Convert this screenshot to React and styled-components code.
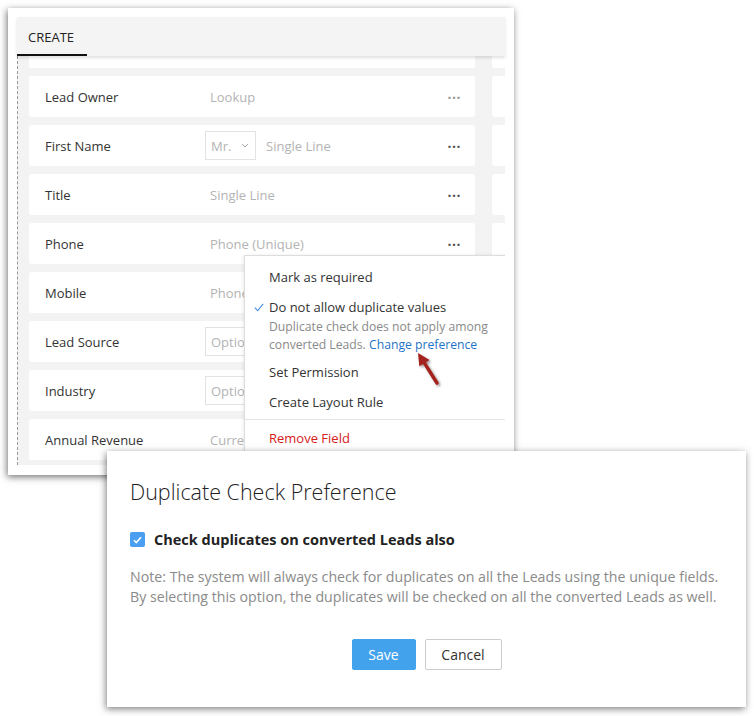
import React from 'react';
import styled, { createGlobalStyle } from 'styled-components';

const Global = createGlobalStyle`
  html, body { margin:0; padding:0; background:#fff; }
  body { font-family: "Open Sans", Lato, sans-serif; }
  * { box-sizing:border-box; }
`;

const Page = styled.div`
  position:relative;
  width:754px;
  height:716px;
  overflow:hidden;
  background:#fff;
`;

const Panel = styled.div`
  margin:8px 0 0 8px;
  width:506px;
  height:467px;
  padding:9px;
  background:#fff;
  box-shadow:-1px 2px 7px rgba(0,0,0,0.55);
`;

const Header = styled.div`
  height:39px;
  background:#f4f4f4;
  display:flex;
  align-items:flex-end;
  box-shadow:0 2px 3px rgba(0,0,0,0.12);
  position:relative;
  z-index:1;
`;

const Tab = styled.div`
  width:70px;
  height:39px;
  display:flex;
  align-items:center;
  padding-left:11px;
  padding-top:3px;
  font-size:13px;
  color:#222;
  border-bottom:2px solid #111;
`;

const Content = styled.div`
  position:relative;
  height:409px;
  background:#f3f3f3;
  overflow:hidden;
  border-left:1px dashed #999;
`;

const Grid = styled.div`
  display:grid;
  grid-template-columns:446px 60px;
  column-gap:17px;
  row-gap:8px;
  margin-top:-29px;
  padding-left:11px;
`;

const Card = styled.div`
  height:41px;
  background:#fff;
  border-radius:3px;
  display:flex;
  align-items:center;
  padding:0 14px 0 16px;
`;

const Label = styled.div`
  width:165px;
  font-size:13px;
  color:#333;
`;

const Hint = styled.div`
  flex:1;
  font-size:13px;
  color:#b3b3b3;
`;

const Select = styled.div`
  width:51px;
  height:29px;
  border:1px solid #e3e3e3;
  margin-left:-5px;
  margin-right:10px;
  display:flex;
  align-items:center;
  justify-content:space-between;
  padding:0 6px 0 5px;
  font-size:13px;
  color:#b3b3b3;
`;

const OptionBox = styled.div`
  width:120px;
  height:29px;
  border:1px solid #e3e3e3;
  margin-left:-5px;
  display:flex;
  align-items:center;
  padding-left:5px;
  font-size:13px;
  color:#b3b3b3;
`;

const Dots = styled.div`
  font-size:14px;
  letter-spacing:0.5px;
  color:${p => (p.dark ? '#555' : '#999')};
  font-weight:700;
  line-height:1;
  padding-bottom:6px;
`;

const Menu = styled.div`
  position:absolute;
  left:226px;
  top:199px;
  width:290px;
  height:240px;
  background:#fff;
  border:1px solid #ddd;
  box-shadow:0 1px 4px rgba(0,0,0,0.12);
  padding-top:6px;
`;

const MenuItem = styled.div`
  position:relative;
  padding:0 0 0 24px;
  height:30px;
  display:flex;
  align-items:center;
  font-size:13px;
  color:${p => (p.danger ? '#d6201a' : '#333')};
`;

const Check = styled.svg`
  position:absolute;
  left:9px;
  top:11px;
`;

const SubText = styled.div`
  padding-left:24px;
  font-size:12.2px;
  line-height:18px;
  color:#8a8a8a;
  margin-top:-4px;
  margin-bottom:3px;
`;

const Link = styled.span`
  color:#1f73c9;
`;

const Divider = styled.div`
  border-top:1px solid #e4e4e4;
  margin:2px 0 3px;
`;

const Arrow = styled.svg`
  position:absolute;
  left:410px;
  top:347px;
`;

const Dialog = styled.div`
  position:absolute;
  left:107px;
  top:451px;
  width:639px;
  height:256px;
  background:#fff;
  box-shadow:-1px 2px 7px rgba(0,0,0,0.5);
  padding:28px 23px 0;
  display:flex;
  flex-direction:column;
`;

const Title = styled.div`
  font-size:21.5px;
  font-weight:300;
  color:#222;
  line-height:26px;
`;

const CheckRow = styled.div`
  display:flex;
  align-items:center;
  gap:9px;
  margin-top:25px;
  font-size:14.5px;
  font-weight:700;
  color:#222;
`;

const Box = styled.div`
  width:15px;
  height:15px;
  border-radius:2px;
  background:#4a9ff0;
  display:flex;
  align-items:center;
  justify-content:center;
`;

const Note = styled.div`
  margin-top:18px;
  font-size:14.2px;
  line-height:20px;
  color:#8a8a8a;
`;

const Buttons = styled.div`
  display:flex;
  justify-content:center;
  gap:9px;
  margin-top:32px;
`;

const Button = styled.div`
  height:31px;
  width:${p => p.w}px;
  display:flex;
  align-items:center;
  justify-content:center;
  font-size:14px;
  border-radius:2px;
  background:${p => (p.primary ? '#42a2ec' : '#fff')};
  color:${p => (p.primary ? '#fff' : '#333')};
  border:1px solid ${p => (p.primary ? '#42a2ec' : '#ccc')};
`;

const Chevron = () => (
  <svg width="8" height="5" viewBox="0 0 8 5">
    <path d="M1 1l3 3 3-3" fill="none" stroke="#aaa" strokeWidth="1" />
  </svg>
);

const rows = [
  { label: '', hint: '' },
  { label: 'Lead Owner', hint: 'Lookup' },
  { label: 'First Name', hint: 'Single Line', select: true },
  { label: 'Title', hint: 'Single Line' },
  { label: 'Phone', hint: 'Phone (Unique)', dark: true },
  { label: 'Mobile', hint: 'Phone' },
  { label: 'Lead Source', option: 'Option' },
  { label: 'Industry', option: 'Option' },
  { label: 'Annual Revenue', hint: 'Currency' },
];

export default function App() {
  return (
    <Page>
      <Global />
      <Panel>
        <Header>
          <Tab>CREATE</Tab>
        </Header>
        <Content>
          <Grid>
            {rows.map((r, i) => (
              <React.Fragment key={i}>
                <Card>
                  <Label>{r.label}</Label>
                  {r.select && (
                    <Select>
                      Mr.
                      <Chevron />
                    </Select>
                  )}
                  {r.option ? (
                    <OptionBox>{r.option}</OptionBox>
                  ) : (
                    <Hint>{r.hint}</Hint>
                  )}
                  {i > 0 && i < 5 && <Dots dark={r.select || r.dark || r.label === 'Title'}>...</Dots>}
                </Card>
                <Card />
              </React.Fragment>
            ))}
          </Grid>
          <Menu>
            <MenuItem>Mark as required</MenuItem>
            <MenuItem>
              <Check width="10" height="9" viewBox="0 0 10 9">
                <path d="M0.8 4.6l2.9 3 5.5-6.8" fill="none" stroke="#4a90e2" strokeWidth="1.1" />
              </Check>
              Do not allow duplicate values
            </MenuItem>
            <SubText>
              Duplicate check does not apply among
              <br />
              converted Leads. <Link>Change preference</Link>
            </SubText>
            <MenuItem>Set Permission</MenuItem>
            <MenuItem>Create Layout Rule</MenuItem>
            <Divider />
            <MenuItem danger>Remove Field</MenuItem>
          </Menu>
        </Content>
      </Panel>
      <Arrow width="34" height="42" viewBox="0 0 34 42">
        <defs>
          <filter id="sh" x="-50%" y="-50%" width="200%" height="200%">
            <feDropShadow dx="1.5" dy="1.5" stdDeviation="1.2" floodColor="#000" floodOpacity="0.45" />
          </filter>
        </defs>
        <g filter="url(#sh)">
          <path d="M13.5 14.7L27 36" stroke="#a3211b" strokeWidth="3.4" strokeLinecap="round" />
          <path d="M8 6L19.5 12.9L9.3 19.3z" fill="#a3211b" />
        </g>
      </Arrow>
      <Dialog>
        <Title>Duplicate Check Preference</Title>
        <CheckRow>
          <Box>
            <svg width="9" height="8" viewBox="0 0 9 8">
              <path d="M1 4.2l2.3 2.3L8 1.3" fill="none" stroke="#fff" strokeWidth="1.6" />
            </svg>
          </Box>
          Check duplicates on converted Leads also
        </CheckRow>
        <Note>
          Note: The system will always check for duplicates on all the Leads using the unique fields.
          <br />
          By selecting this option, the duplicates will be checked on all the converted Leads as well.
        </Note>
        <Buttons>
          <Button primary w={64}>Save</Button>
          <Button w={77}>Cancel</Button>
        </Buttons>
      </Dialog>
    </Page>
  );
}
